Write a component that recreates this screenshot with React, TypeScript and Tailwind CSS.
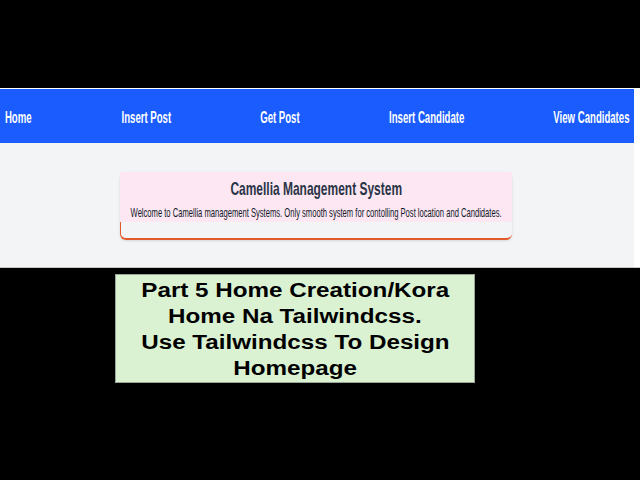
const navItems = [
  { label: 'Home', w: 'w-[27px]' },
  { label: 'Insert Post', w: 'w-[48px]' },
  { label: 'Get Post', w: 'w-[38px]' },
  { label: 'Insert Candidate', w: 'w-[75px]' },
  { label: 'View Candidates', w: 'w-[75px]' },
];

const bannerLines = ['Part 5 Home Creation/Kora', 'Home Na Tailwindcss.', 'Use Tailwindcss To Design', 'Homepage'];

export default function App() {
  return (
    <div
      className="w-[640px] h-[480px] bg-black flex flex-col overflow-hidden"
      style={{ fontFamily: '"Liberation Sans", Arial, sans-serif' }}
    >
      <div className="h-[88px] shrink-0" />
      <div className="flex flex-col h-[180px] shrink-0 bg-white pt-px">
        <div className="flex flex-1">
          <div className="w-[634px] flex flex-col bg-[#f3f4f6]">
            <nav className="h-[54px] bg-[#1a5cfd] flex items-center justify-between px-[5px] pt-[3px] text-white font-bold text-[16px]">
              {navItems.map((item) => (
                <a key={item.label} href="#" className={`${item.w} flex justify-center whitespace-nowrap`}>
                  <span className="inline-block scale-x-[0.6]">{item.label}</span>
                </a>
              ))}
            </nav>
            <div className="flex pt-[29px] pl-[120px]">
              <div className="w-[392px] rounded-md border-b-2 border-l border-[#e05a2a] shadow-sm">
                <div className="bg-[#fce7f3] h-[50px] -ml-px flex flex-col items-center pt-[5px] whitespace-nowrap">
                  <h1 className="text-[#2a3447] font-bold text-[19px] leading-[24px] scale-x-[0.63]">
                    Camellia Management System
                  </h1>
                  <p className="text-[#111827] text-[13px] leading-[16px] mt-[4px] scale-x-[0.585]">
                    Welcome to Camellia management Systems. Only smooth system for contolling Post location and Candidates.
                  </p>
                </div>
                <div className="h-[16px]" />
              </div>
            </div>
          </div>
        </div>
        <div className="h-px bg-[#c8c8c8]" />
      </div>
      <div className="pl-[115px] pt-[6px]">
        <div className="w-[360px] h-[109px] bg-[#dbf2d2] border border-[#9aa59a] flex flex-col items-center justify-center text-black font-bold text-[20px] leading-[26px] text-center whitespace-nowrap">
          {bannerLines.map((line) => (
            <div key={line} className="scale-x-[1.21]">
              {line}
            </div>
          ))}
        </div>
      </div>
    </div>
  );
}
